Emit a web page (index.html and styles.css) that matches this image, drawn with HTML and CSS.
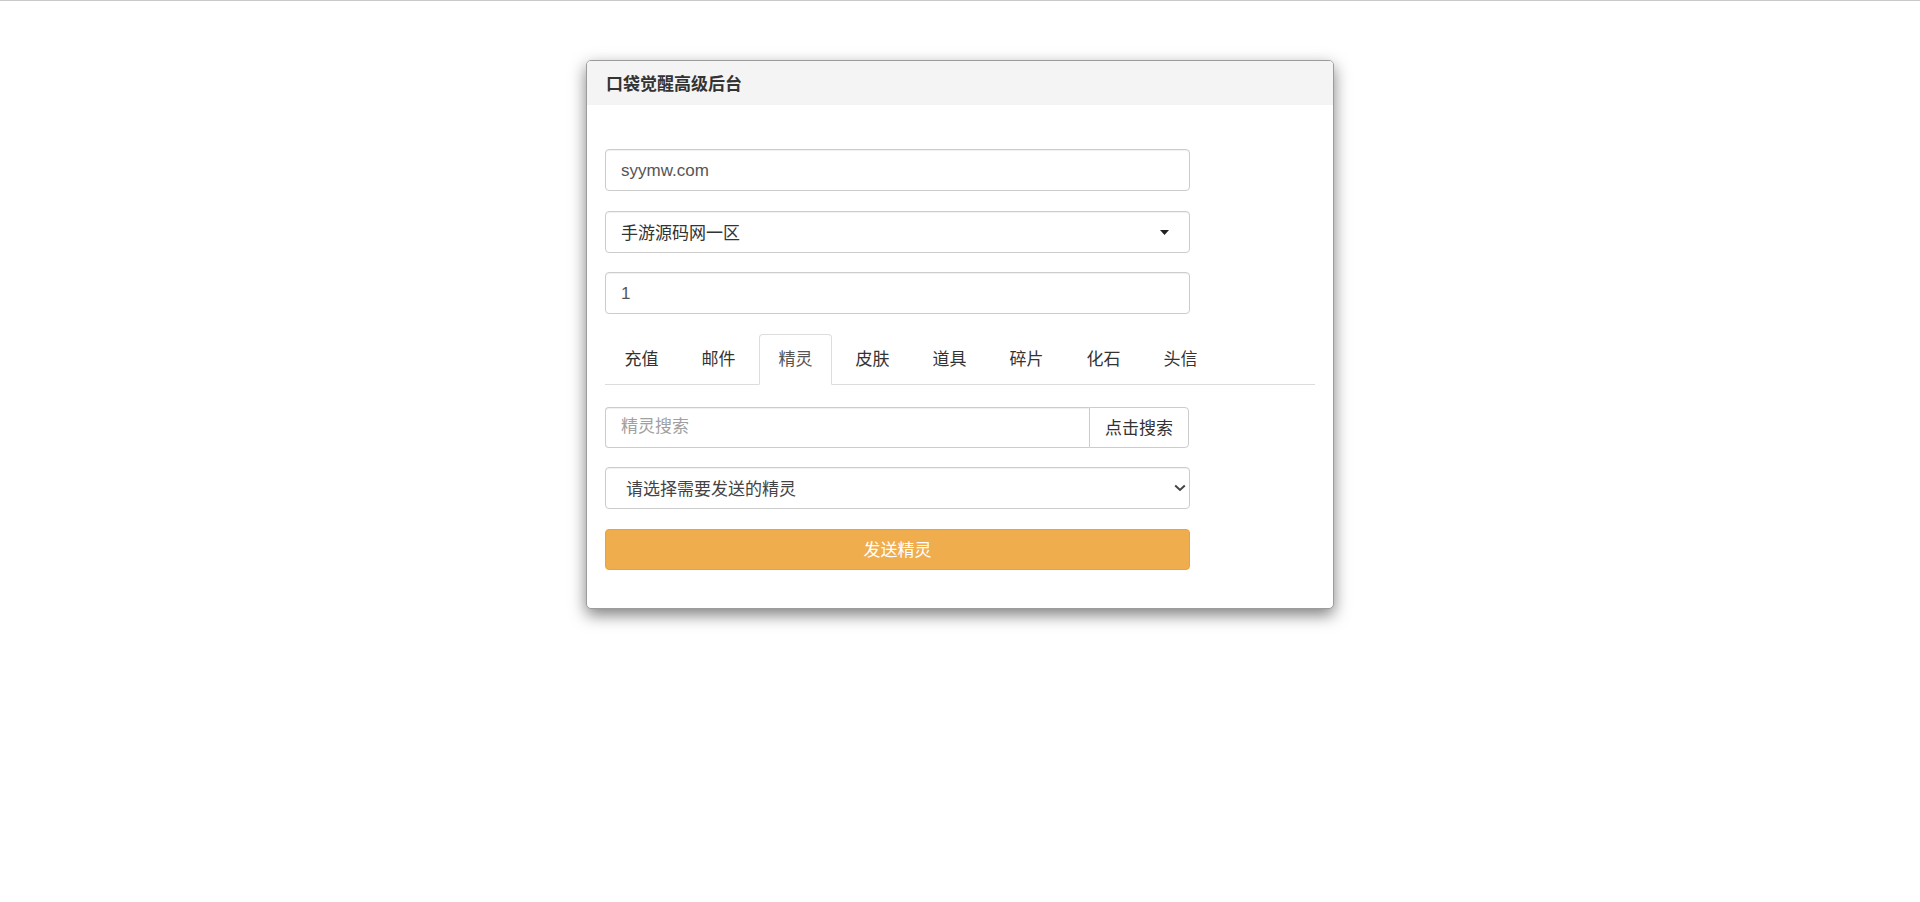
FILE: index.html
```html
<!DOCTYPE html>
<html lang="zh-CN">
<head>
<meta charset="utf-8">
<title>口袋觉醒高级后台</title>
<link rel="stylesheet" href="styles.css">
</head>
<body>
<div class="topline"></div>
<div class="panel">
  <div class="panel-head">口袋觉醒高级后台</div>
  <div class="panel-body">
    <div class="field"><input class="control text-input" type="text" value="syymw.com"></div>
    <div class="field">
      <div class="control dropdown">
        <span>手游源码网一区</span>
        <svg class="caret" width="9" height="5" viewBox="0 0 9 5"><path d="M0 0h9L4.5 5z" fill="#222"/></svg>
      </div>
    </div>
    <div class="field"><input class="control text-input" type="text" value="1"></div>

    <div class="tabs">
      <div class="tab">充值</div>
      <div class="tab">邮件</div>
      <div class="tab active">精灵</div>
      <div class="tab">皮肤</div>
      <div class="tab">道具</div>
      <div class="tab">碎片</div>
      <div class="tab">化石</div>
      <div class="tab">头信</div>
    </div>

    <div class="search-group">
      <input class="search-input" type="text" placeholder="精灵搜索">
      <button class="search-btn" type="button">点击搜索</button>
    </div>
    <div class="field">
      <div class="control native-select">
        <span>请选择需要发送的精灵</span>
        <svg class="chev" width="12" height="8" viewBox="0 0 12 8"><path d="M1.2 1.5L6 6l4.8-4.5" fill="none" stroke="#444" stroke-width="2"/></svg>
      </div>
    </div>
    <button class="send-btn" type="button">发送精灵</button>
  </div>
</div>
</body>
</html>
```

FILE: styles.css
```css
html, body {
  margin: 0;
  padding: 0;
  background: #fff;
}
body {
  min-height: 100vh;
  font-family: "Liberation Sans", "Noto Sans CJK SC", sans-serif;
  font-size: 17px;
  color: #333;
}
.topline {
  height: 1px;
  background: #c9c9c9;
}
.panel {
  box-sizing: border-box;
  width: 748px;
  margin: 59px auto 0;
  border: 1px solid #9c9c9c;
  border-radius: 5px;
  background: #fff;
  box-shadow: 0 6px 16px rgba(0, 0, 0, 0.5);
}
.panel-head {
  height: 44px;
  box-sizing: border-box;
  padding: 0 19px 1px;
  display: flex;
  align-items: center;
  background: #f4f4f4;
  border-radius: 4px 4px 0 0;
  font-weight: bold;
  font-size: 17px;
  color: #333;
}
.panel-body {
  padding: 44px 18px 38px;
}
.field {
  width: 585px;
  margin-bottom: 19.5px;
}
.control {
  box-sizing: border-box;
  width: 100%;
  height: 42px;
  padding: 0 15px;
  border: 1px solid #ccc;
  border-radius: 4px;
  box-shadow: inset 0 1px 1px rgba(0, 0, 0, 0.06);
  font: inherit;
  font-size: 17px;
  color: #555;
  background: #fff;
  outline: none;
  display: block;
}
.text-input {
  padding-top: 2px;
}
.dropdown, .native-select {
  display: flex;
  align-items: center;
  justify-content: space-between;
  color: #333;
}
.dropdown {
  padding-right: 20px;
}
.native-select {
  padding-left: 20px;
  padding-right: 3px;
  padding-bottom: 2px;
  color: #444;
}
.caret {
  display: block;
  margin-top: 1px;
}
.chev {
  display: block;
  margin-top: 2px;
}
.tabs {
  display: flex;
  border-bottom: 1px solid #ddd;
}
.tab {
  box-sizing: border-box;
  height: 51px;
  margin-bottom: -1px;
  margin-right: 4px;
  padding: 0 18.5px 4px;
  border: 1px solid transparent;
  border-radius: 4px 4px 0 0;
  display: flex;
  align-items: center;
  color: #333;
}
.tab.active {
  border-color: #ddd;
  border-bottom-color: #fff;
  background: #fff;
  color: #555;
}
.search-group {
  display: flex;
  width: 584px;
  height: 41px;
  margin-top: 22px;
  margin-bottom: 19.5px;
}
.search-input {
  flex: 1;
  box-sizing: border-box;
  height: 100%;
  padding: 0 15px 1px;
  border: 1px solid #ccc;
  border-right: 0;
  border-radius: 4px 0 0 4px;
  box-shadow: inset 0 1px 1px rgba(0, 0, 0, 0.06);
  font: inherit;
  color: #555;
  outline: none;
}
.search-input::placeholder {
  color: #a0a0a0;
}
.search-btn {
  box-sizing: border-box;
  height: 100%;
  padding: 0 15px 2px;
  border: 1px solid #ccc;
  border-radius: 0 4px 4px 0;
  background: #fff;
  font: inherit;
  color: #333;
}
.send-btn {
  display: block;
  box-sizing: border-box;
  width: 585px;
  height: 41.5px;
  border: 1px solid #eea236;
  border-radius: 4px;
  background: #f0ad4e;
  color: #fff;
  font: inherit;
  padding: 0 0 2px;
}
```
